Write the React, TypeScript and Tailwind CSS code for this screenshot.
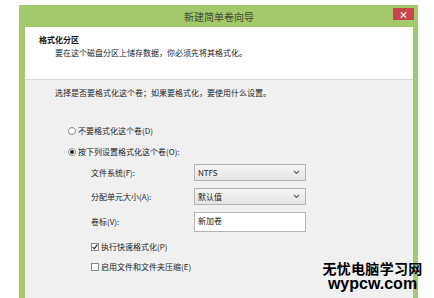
import React from 'react';

const font = { fontFamily: '"Noto Sans CJK SC", "Noto Sans", sans-serif' };

const Chevron = () => (
  <svg width="7" height="5" viewBox="0 0 7 5" className="text-[#666]">
    <path d="M1 1l2.5 2.5L6 1" fill="none" stroke="currentColor" strokeWidth="1.1" />
  </svg>
);

const SelectBox = ({ value }: { value: string }) => (
  <div className="flex h-[17px] w-[112px] items-center justify-between border border-[#b4b4b4] bg-gradient-to-b from-[#f4f4f4] to-[#e5e5e5] pl-[3px] pr-[5px] text-[8px] text-[#222]">
    <span>{value}</span>
    <Chevron />
  </div>
);

export default function App() {
  return (
    <div className="relative h-[298px] w-[434px] overflow-hidden bg-white" style={font}>
      <div className="ml-[19px] mt-[5px] w-[399px] bg-[#a3c96c] px-[6px] pr-[5px]">
        {/* title bar */}
        <div className="relative flex h-[22px] items-center justify-center">
          <span className="text-[10px] text-[#3d4a30]">新建简单卷向导</span>
          <div className="absolute right-[-1px] top-[3px] flex h-[12px] w-[21px] items-center justify-center bg-[#c9474c]">
            <span className="text-[9px] leading-none font-bold text-white">×</span>
          </div>
        </div>

        {/* header */}
        <div className="h-[53px] border-b border-[#d8d8d8] bg-white pl-[14px] pt-[6px] text-[8px]">
          <div className="leading-[13px] font-bold text-[#111]">格式化分区</div>
          <div className="pl-[16px] leading-[13px] text-[#222]">要在这个磁盘分区上储存数据，你必须先将其格式化。</div>
        </div>

        {/* body */}
        <div className="h-[220px] bg-[#f0f0f0] pl-[30px] pt-[6px] text-[8px] text-[#222]">
          <div className="leading-[13px]">选择是否要格式化这个卷；如果要格式化，要使用什么设置。</div>

          <div className="mt-[24px] flex flex-col gap-[5px] pl-[13px]">
            <div className="flex h-[16px] items-center gap-[2px]">
              <span className="h-[8px] w-[8px] rounded-full border border-[#8a8a8a] bg-white" />
              <span>不要格式化这个卷(D)</span>
            </div>
            <div className="flex h-[16px] items-center gap-[2px]">
              <span className="flex h-[8px] w-[8px] items-center justify-center rounded-full border border-[#8a8a8a] bg-white">
                <span className="h-[4px] w-[4px] rounded-full bg-[#222]" />
              </span>
              <span>按下列设置格式化这个卷(O):</span>
            </div>
          </div>

          <div className="mt-[4px] flex flex-col gap-[7px] pl-[36px]">
            <div className="flex items-center">
              <span className="w-[103px]">文件系统(F):</span>
              <SelectBox value="NTFS" />
            </div>
            <div className="flex items-center">
              <span className="w-[103px]">分配单元大小(A):</span>
              <SelectBox value="默认值" />
            </div>
            <div className="flex items-center">
              <span className="w-[103px]">卷标(V):</span>
              <div className="flex h-[20px] w-[112px] items-start border border-[#b4b4b4] bg-white pl-[3px] pt-[2px]">新加卷</div>
            </div>
          </div>

          <div className="mt-[7px] flex flex-col gap-[4px] pl-[36px]">
            <div className="flex h-[16px] items-center gap-[2px]">
              <span className="flex h-[8px] w-[8px] items-center justify-center border border-[#8a8a8a] bg-white">
                <svg width="6" height="6" viewBox="0 0 6 6">
                  <path d="M0.6 3.1l1.6 1.6 3.2-4" fill="none" stroke="#222" strokeWidth="1.1" />
                </svg>
              </span>
              <span>执行快速格式化(P)</span>
            </div>
            <div className="flex h-[16px] items-center gap-[2px]">
              <span className="h-[8px] w-[8px] border border-[#8a8a8a] bg-white" />
              <span>启用文件和文件夹压缩(E)</span>
            </div>
          </div>
        </div>
      </div>

      {/* watermark */}
      <div className="absolute left-[322px] top-[261px] flex w-[101px] flex-col items-center whitespace-nowrap text-black">
        <span className="text-[14px] leading-[15px] font-bold tracking-[0.3px]">无忧电脑学习网</span>
        <span className="text-[16px] leading-[16px] font-bold" style={{ fontFamily: '"Liberation Sans", Arial, sans-serif' }}>wypcw.com</span>
      </div>
    </div>
  );
}
